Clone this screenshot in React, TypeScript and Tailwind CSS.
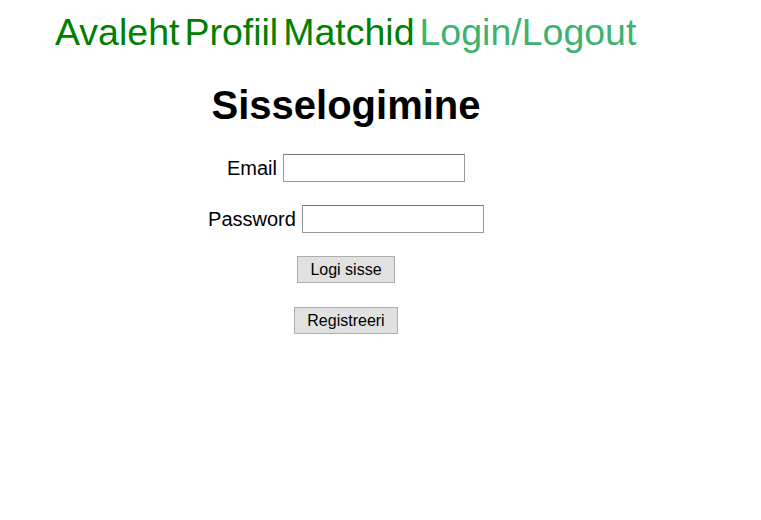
export default function App() {
  return (
    <div className="min-h-[520px] w-[761px] bg-white font-['Liberation_Sans',Arial,sans-serif] text-black">
      <nav className="flex gap-[5px] pl-[55px] pt-[10px] text-[37.5px] leading-[44px]">
        <a href="#" className="text-[#008000]">Avaleht</a>
        <a href="#" className="text-[#008000]">Profiil</a>
        <a href="#" className="text-[#008000]">Matchid</a>
        <a href="#" className="text-[#3cb371]">Login/Logout</a>
      </nav>

      <div className="flex w-[692px] flex-col items-center">
        <h1 className="mt-[28px] text-[40px] font-bold leading-[46px]">Sisselogimine</h1>

        <form className="mt-[26px] flex flex-col items-center gap-[23px] text-[20px] leading-[28px]">
          <label className="flex items-center gap-[6px]">
            Email
            <input type="text" className="h-[28px] w-[182px] border border-[#9a9a9a] border-t-[#767676] px-1" />
          </label>
          <label className="flex items-center gap-[6px]">
            Password
            <input type="password" className="h-[28px] w-[182px] border border-[#9a9a9a] border-t-[#767676] px-1" />
          </label>
          <button
            type="button"
            className="h-[27px] border border-[#adadad] bg-[#e1e1e1] px-[12px] text-[16px] leading-none"
          >
            Logi sisse
          </button>
          <button
            type="button"
            className="mt-[1px] h-[27px] border border-[#adadad] bg-[#e1e1e1] px-[12px] text-[16px] leading-none"
          >
            Registreeri
          </button>
        </form>
      </div>
    </div>
  );
}
